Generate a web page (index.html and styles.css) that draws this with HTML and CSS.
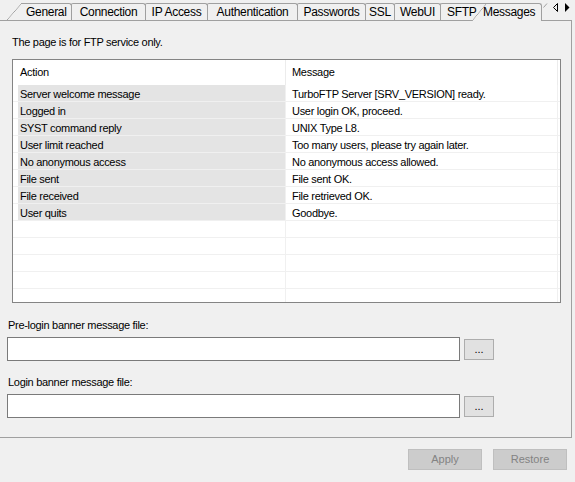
FILE: index.html
```html
<!DOCTYPE html>
<html>
<head>
<meta charset="utf-8">
<link rel="stylesheet" href="styles.css">
</head>
<body>
<div class="tabs">
  <div class="tab tab-first">General</div>
  <div class="tab w-connection">Connection</div>
  <div class="tab w-ip">IP Access</div>
  <div class="tab w-auth">Authentication</div>
  <div class="tab w-pass">Passwords</div>
  <div class="tab w-ssl">SSL</div>
  <div class="tab w-webui">WebUI</div>
  <div class="tab tab-sftp">SFTP</div>
  <div class="tab tab-active">Messages</div>
  <svg class="tab-scroll" width="30" height="16" viewBox="0 0 30 16">
    <line x1="1.5" y1="7.5" x2="5" y2="3.5" stroke="#a0a0a0" stroke-width="1"/>
    <polygon points="11.5,7.5 15.5,3.5 15.5,11.5" fill="none" stroke="#000" stroke-width="1"/>
    <polygon points="23,3 27.5,7.5 23,12" fill="#000"/>
  </svg>
</div>
<div class="page">
  <p class="note">The page is for FTP service only.</p>
  <div class="grid">
    <div class="row head"><div class="ind"></div><div class="c1">Action</div><div class="c2">Message</div><div class="pad"></div></div>
    <div class="row data"><div class="ind"></div><div class="c1">Server welcome message</div><div class="c2">TurboFTP Server [SRV_VERSION] ready.</div><div class="pad"></div></div>
    <div class="row data"><div class="ind"></div><div class="c1">Logged in</div><div class="c2">User login OK, proceed.</div><div class="pad"></div></div>
    <div class="row data"><div class="ind"></div><div class="c1">SYST command reply</div><div class="c2">UNIX Type L8.</div><div class="pad"></div></div>
    <div class="row data"><div class="ind"></div><div class="c1">User limit reached</div><div class="c2">Too many users, please try again later.</div><div class="pad"></div></div>
    <div class="row data"><div class="ind"></div><div class="c1">No anonymous access</div><div class="c2">No anonymous access allowed.</div><div class="pad"></div></div>
    <div class="row data"><div class="ind"></div><div class="c1">File sent</div><div class="c2">File sent OK.</div><div class="pad"></div></div>
    <div class="row data"><div class="ind"></div><div class="c1">File received</div><div class="c2">File retrieved OK.</div><div class="pad"></div></div>
    <div class="row data"><div class="ind"></div><div class="c1">User quits</div><div class="c2">Goodbye.</div><div class="pad"></div></div>
    <div class="row data empty"><div class="ind"></div><div class="c1"></div><div class="c2"></div><div class="pad"></div></div>
    <div class="row data empty"><div class="ind"></div><div class="c1"></div><div class="c2"></div><div class="pad"></div></div>
    <div class="row data empty"><div class="ind"></div><div class="c1"></div><div class="c2"></div><div class="pad"></div></div>
    <div class="row data empty"><div class="ind"></div><div class="c1"></div><div class="c2"></div><div class="pad"></div></div>
    <div class="row data empty"><div class="ind"></div><div class="c1"></div><div class="c2"></div><div class="pad"></div></div>
  </div>
  <label class="field-label">Pre-login banner message file:</label>
  <div class="field-row"><input class="field" type="text"><button class="browse">...</button></div>
  <label class="field-label second">Login banner message file:</label>
  <div class="field-row"><input class="field" type="text"><button class="browse">...</button></div>
</div>
<div class="footer">
  <button class="btn" disabled>Apply</button>
  <button class="btn" disabled>Restore</button>
</div>
</body>
</html>
```
FILE: styles.css
```css
* { box-sizing: border-box; }
html, body { margin: 0; padding: 0; }
body {
  width: 575px;
  height: 482px;
  overflow: hidden;
  background: #f0f0f0;
  font-family: "Liberation Sans", Arial, sans-serif;
  font-size: 11px;
  letter-spacing: -0.3px;
  color: #000;
}

/* ---------- tab strip ---------- */
.tabs {
  display: flex;
  align-items: flex-end;
  height: 20px;
  padding-left: 21px;
}
.tab {
  flex: none;
  height: 17px;
  margin-left: -1px;
  border: 1px solid #a0a0a0;
  border-bottom: 0;
  border-radius: 2px 3px 0 0;
  background: #f0f0f0;
  font-size: 12px;
  letter-spacing: -0.3px;
  line-height: 16px;
  text-align: center;
  white-space: nowrap;
}
.tab-first {
  position: relative;
  z-index: 1;
  width: 51px;
  margin-left: 0;
  border-left: 0;
  border-top-left-radius: 0;
  padding-left: 5px;
  text-align: left;
}
.tab-first::before,
.tab-active::before {
  content: "";
  position: absolute;
  top: -1px;
  left: -14px;
  width: 15px;
  height: 17px;
  z-index: -1;
  background: linear-gradient(to bottom right, transparent calc(50% - 0.6px), #a0a0a0 50%, #f0f0f0 calc(50% + 0.6px));
}
.w-connection { width: 75px; }
.w-ip { width: 63px; }
.w-auth { width: 91px; }
.w-pass { width: 69px; }
.w-ssl { width: 30px; }
.w-webui { width: 47px; }
.tab-sftp {
  width: 46px;
  border-right: 0;
  border-top-right-radius: 0;
  padding-left: 6px;
  text-align: left;
}
.tab-active {
  position: relative;
  z-index: 2;
  width: 56px;
  height: 18px;
  margin-left: 0;
  margin-bottom: -1px;
  border-left: 0;
  border-top-left-radius: 0;
  text-align: left;
  text-indent: -3px;
}
.tab-active::before { height: 18px; }
.tab-scroll {
  flex: none;
  align-self: flex-start;
  margin-left: 0;
}

/* ---------- page ---------- */
.page {
  width: 572px;
  height: 418px;
  border-top: 1px solid #a0a0a0;
  border-right: 1px solid #a0a0a0;
  border-bottom: 1px solid #a0a0a0;
  padding-top: 15px;
}
.note {
  margin: 0 0 0 12px;
  line-height: 13px;
}
.grid {
  margin: 10px 0 0 12px;
  width: 549px;
  height: 244px;
  border: 1px solid #848484;
  background: #fff;
  overflow: hidden;
}
.row {
  display: grid;
  grid-template-columns: 5px 268px 272px 2px;
}
.row > div { white-space: nowrap; overflow: hidden; }
.head { height: 25px; line-height: 25px; }
.head .c1 { border-right: 1px solid #ececec; padding-left: 2px; }
.head .c2 { border-right: 1px solid #ececec; padding-left: 6px; }
.data > div {
  height: 17px;
  padding-top: 1px;
  line-height: 16px;
  border-bottom: 1px solid #f0f0f0;
}
.data .c1 {
  background: #e4e4e4;
  border-right: 1px solid #f0f0f0;
  padding-left: 2px;
}
.data .c2 {
  border-right: 1px solid #f0f0f0;
  padding-left: 6px;
}
.data.empty .c1 { background: #fff; }

.field-label {
  display: block;
  margin-top: 16px;
  padding-left: 8px;
  line-height: 13px;
}
.field-label.second { margin-top: 15px; }
.field-row {
  display: flex;
  align-items: center;
  gap: 4px;
  margin-top: 5px;
  padding-left: 7px;
}
.field {
  width: 453px;
  height: 24px;
  margin: 0;
  border: 1px solid #7a7a7a;
  background: #fff;
  font: inherit;
}
.browse {
  width: 30px;
  height: 21px;
  margin: 1px 0 0 0;
  padding: 0;
  border: 1px solid #adadad;
  background: #e1e1e1;
  font: inherit;
  color: #000;
  line-height: 17px;
}

/* ---------- footer ---------- */
.footer {
  display: flex;
  justify-content: flex-end;
  gap: 11px;
  padding: 11px 8px 0 0;
}
.btn {
  width: 74px;
  height: 21px;
  margin: 0;
  padding: 0;
  border: 1px solid #bfbfbf;
  background: #cccccc;
  color: #838383;
  font: inherit;
  line-height: 19px;
}
```
